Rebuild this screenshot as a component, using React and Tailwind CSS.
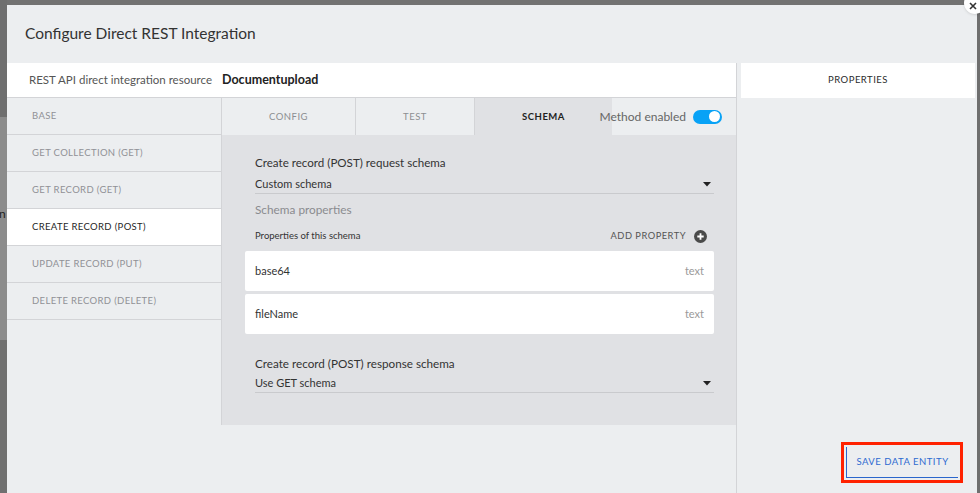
import React from 'react';

const NAV = [
  { label: 'BASE' },
  { label: 'GET COLLECTION (GET)' },
  { label: 'GET RECORD (GET)' },
  { label: 'CREATE RECORD (POST)', active: true },
  { label: 'UPDATE RECORD (PUT)' },
  { label: 'DELETE RECORD (DELETE)' },
];

const TABS = [
  { label: 'CONFIG', w: 'w-[134px]' },
  { label: 'TEST', w: 'w-[119px]' },
  { label: 'SCHEMA', w: 'w-[137px]', active: true },
];

function Caret() {
  return (
    <svg width="8" height="5" viewBox="0 0 8 5" className="mr-[3px]">
      <path d="M0 0 L8 0 L4 4.5 Z" fill="#222" />
    </svg>
  );
}

function SelectRow({ value, top }) {
  return (
    <div className={`${top} pb-[1px] flex items-center justify-between border-b border-[#c9cacd] text-[11px] leading-[16px] text-[#333]`}>
      <span>{value}</span>
      <Caret />
    </div>
  );
}

function PropertyCard({ name, type, spacing }) {
  return (
    <div className={`${spacing} -ml-[10px] h-[40px] bg-white rounded-[2px] flex items-center justify-between px-[10px] text-[11px]`}>
      <span className="text-[#333]">{name}</span>
      <span className="text-[#9a9a9a]">{type}</span>
    </div>
  );
}

export default function App() {
  return (
    <div
      className="w-[980px] h-[493px] bg-[#727272] flex relative overflow-hidden"
      style={{ fontFamily: 'Lato, "Open Sans", Arial, sans-serif' }}
    >
      {/* backdrop sliver */}
      <div className="w-[7px] flex flex-col shrink-0">
        <div className="h-[117px] bg-[#6f6f6f]" />
        <div className="h-[223px] bg-[#8c8c8c] relative">
          <span className="absolute left-[-1px] top-[88px] text-[12px] text-[#222]">n</span>
        </div>
        <div className="flex-1 bg-[#707070]" />
      </div>

      {/* modal */}
      <div className="w-[970px] mt-[5px] bg-[#eceef0] flex flex-col shrink-0">
        <div className="h-[58px] flex items-center pl-[18px] text-[15.5px] text-[#333]">
          Configure Direct REST Integration
        </div>

        <div className="flex flex-1">
          {/* left / main */}
          <div className="w-[730px] flex flex-col border-r border-[#d3d4d7]">
            <div className="h-[35px] bg-white border-b border-[#d3d4d7] flex items-center pl-[22px]">
              <span className="text-[11.5px] text-[#555]">REST API direct integration resource</span>
              <span className="ml-[10px] text-[12.5px] font-bold text-[#222]">Documentupload</span>
            </div>

            <div className="flex">
              <nav className="w-[215px] border-r border-[#d3d4d7] flex flex-col">
                {NAV.map(({ label, active }) => (
                  <div
                    key={label}
                    className={`h-[37px] border-b border-[#d3d4d7] flex items-center pl-[25px] pt-[1px] text-[9.5px] tracking-[0.35px] ${
                      active ? 'bg-white text-[#1f1f1f]' : 'text-[#909196]'
                    }`}
                  >
                    {label}
                  </div>
                ))}
              </nav>

              <div className="flex-1 flex flex-col">
                <div className="h-[37px] flex">
                  {TABS.map(({ label, w, active }) => (
                    <div
                      key={label}
                      className={`${w} flex items-center justify-center pt-[2px] text-[9.5px] tracking-[0.5px] ${
                        active
                          ? 'bg-[#e0e1e4] text-[#1f1f1f] font-bold'
                          : 'border-r border-[#d3d4d7] text-[#8d8e92]'
                      }`}
                    >
                      {label}
                    </div>
                  ))}
                  <div className="flex-1 flex items-center justify-end pr-[14px] -ml-[20px]">
                    <span className="text-[12px] text-[#666]">Method enabled</span>
                    <div className="ml-[7px] w-[29px] h-[14px] rounded-full bg-[#08a2f6] flex items-center justify-end pr-[2px]">
                      <div className="w-[11px] h-[11px] rounded-full bg-white" />
                    </div>
                  </div>
                </div>

                <div className="h-[290px] bg-[#e0e1e4] pl-[33px] pr-[22px] pt-[20px] flex flex-col">
                  <div className="text-[11.6px] leading-[16px] text-[#333]">
                    Create record (POST) request schema
                  </div>
                  <SelectRow value="Custom schema" top="pt-[5px]" />
                  <div className="mt-[8px] text-[11.8px] leading-[16px] text-[#8a8b8f]">Schema properties</div>
                  <div className="mt-[10px] h-[16px] flex items-center justify-between">
                    <span className="text-[9.5px] text-[#333]">Properties of this schema</span>
                    <span className="flex items-center text-[9.3px] tracking-[0.5px] text-[#555]">
                      ADD PROPERTY
                      <svg width="13" height="13" viewBox="0 0 13 13" className="ml-[8px] mr-[7px]">
                        <circle cx="6.5" cy="6.5" r="6.5" fill="#4a4a4a" />
                        <path d="M6.5 3.3 V9.7 M3.3 6.5 H9.7" stroke="#fff" strokeWidth="1.8" />
                      </svg>
                    </span>
                  </div>
                  <PropertyCard name="base64" type="text" spacing="mt-[7px]" />
                  <PropertyCard name="fileName" type="text" spacing="mt-[3px]" />
                  <div className="mt-[21px] text-[11.7px] leading-[16px] text-[#333]">
                    Create record (POST) response schema
                  </div>
                  <SelectRow value="Use GET schema" top="pt-[4px]" />
                </div>

                <div className="flex-1" />
              </div>
            </div>

            <div className="flex-1" />
          </div>

          {/* right */}
          <div className="flex-1 flex flex-col pl-[4px] pr-[2px]">
            <div className="h-[35px] bg-white flex items-center justify-center text-[9.5px] tracking-[0.5px] text-[#2b2b2b]">
              PROPERTIES
            </div>
            <div className="flex-1 flex items-end justify-end pb-[10px] pr-[12px]">
              <div className="border-[3px] border-[#ff2200] p-[2px]">
                <button className="w-[112px] h-[31px] border-l border-b border-[#2a66cc] text-[9.5px] tracking-[0.5px] text-[#2e6bd1] flex items-center justify-center">
                  SAVE DATA ENTITY
                </button>
              </div>
            </div>
          </div>
        </div>
      </div>

      <div className="flex-1 bg-[#6f6f6f]" />

      {/* close button */}
      <div className="absolute left-[964px] top-[-8px] w-[22px] h-[22px] rounded-full bg-white shadow flex items-center justify-center">
        <svg width="8" height="8" viewBox="0 0 8 8" className="mt-[6px] mr-[4px]">
          <path d="M1 1 L7 7 M7 1 L1 7" stroke="#333" strokeWidth="1.6" />
        </svg>
      </div>
    </div>
  );
}
